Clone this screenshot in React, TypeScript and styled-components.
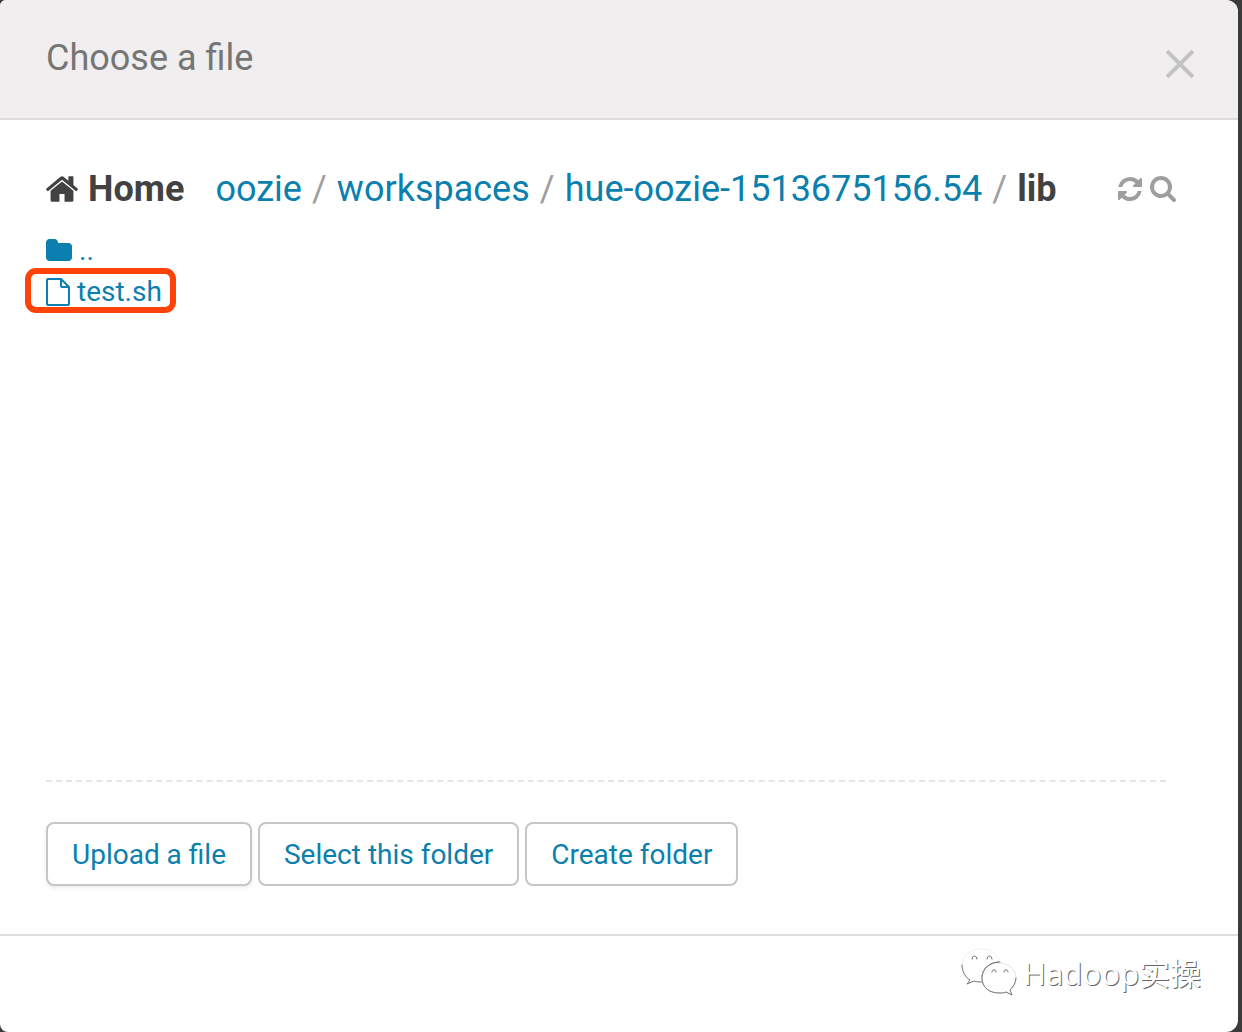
import React from "react";
import styled, { createGlobalStyle, css } from "styled-components";

const GlobalStyle = createGlobalStyle`
  *, *::before, *::after { box-sizing: border-box; }
  body {
    margin: 0;
    background: #3b3b3b;
    color: #424242;
    font-family: Roboto, "Noto Sans CJK SC", sans-serif;
    font-size: 28px;
    line-height: 40px;
  }
`;

const Backdrop = styled.div`
  min-height: 100vh;
  padding-right: 4px;
  display: flex;
`;

const Dialog = styled.section`
  flex: 1;
  min-width: 0;
  display: flex;
  flex-direction: column;
  background: #fff;
  border-radius: 6px 12px 12px 8px;
  overflow: hidden;
`;

const Header = styled.header`
  display: flex;
  justify-content: space-between;
  align-items: flex-start;
  padding: 38px 44px 40px 46px;
  background: #f0eeef;
  border-bottom: 2px solid #dcdcdc;
`;

const Title = styled.h1`
  margin: 0;
  color: #757575;
  font-size: 36px;
  font-weight: 400;
  line-height: 40px;
`;

const IconButton = styled.button`
  display: flex;
  padding: 0;
  border: 0;
  background: none;
  color: #9e9e9e;
  cursor: pointer;
`;

const CloseButton = styled(IconButton)`
  margin-top: 12px;
  color: #c3c3c3;
`;

const Body = styled.div`
  flex: 1;
  display: flex;
  flex-direction: column;
  padding: 48px 62px 48px 46px;
`;

const PathBar = styled.div`
  display: flex;
  justify-content: space-between;
  align-items: center;
`;

const Crumbs = styled.nav`
  display: flex;
  align-items: center;
  font-size: 36px;
  line-height: 42px;
`;

const linkStyle = css`
  color: #0b7fad;
  text-decoration: none;
`;

const Crumb = styled.a`
  ${linkStyle}
`;

const HomeCrumb = styled.a`
  display: flex;
  align-items: center;
  gap: 10px;
  margin-right: 31px;
  color: #424242;
  font-weight: 700;
  text-decoration: none;
`;

const CurrentCrumb = styled.span`
  font-weight: 700;
`;

const Divider = styled.span`
  width: 35px;
  color: #9e9e9e;
  text-align: center;
`;

const Actions = styled.div`
  display: flex;
  align-items: center;
  gap: 8px;
`;

const FileList = styled.ul`
  flex: 1;
  margin: 20px 10px 0 0;
  padding: 0;
  list-style: none;
  border-bottom: 2px dashed #e5e5e5;
`;

const FileItem = styled.li`
  position: relative;
  width: max-content;
`;

const FileLink = styled.a`
  ${linkStyle}
  display: flex;
  align-items: center;
  gap: 7px;
  line-height: 41px;
`;

const Highlight = styled.span`
  position: absolute;
  inset: -3px -14px -1px -21px;
  border: 6px solid #ff4208;
  border-radius: 11px;
  pointer-events: none;
`;

const ButtonRow = styled.div`
  display: flex;
  gap: 6px;
  margin-top: 40px;
`;

const Button = styled.button<{ $raised?: boolean }>`
  padding: 11px 24px 9px;
  border: 2px solid #c6c6c6;
  border-radius: 8px;
  background: #fff;
  color: #0b7fad;
  font: inherit;
  box-shadow: ${(p) => (p.$raised ? "0 2px 4px rgba(0, 0, 0, 0.08)" : "none")};
  cursor: pointer;
`;

const Footer = styled.footer`
  display: flex;
  justify-content: flex-end;
  padding: 12px 37px 34px;
  border-top: 2px solid #dcdcdc;
`;

const Watermark = styled.div`
  display: flex;
  align-items: center;
  gap: 6px;
  height: 50px;
  color: #fff;
  font-family: "Noto Sans", "Noto Sans CJK SC", sans-serif;
  font-size: 31px;
  text-shadow: 1px 1px 0 #666;
`;

const paths = {
  home: "M1472 992v480q0 26-19 45t-45 19h-384v-384h-256v384h-384q-26 0-45-19t-19-45v-480q0-1 .5-3t.5-3l575-474 575 474q1 2 1 6zm223-69l-62 74q-8 9-21 11h-3q-13 0-21-7l-692-577-692 577q-12 8-24 7-13-2-21-11l-62-74q-8-10-7-23.5t11-21.5l719-599q32-26 76-26t76 26l244 204v-195q0-14 9-23t23-9h192q14 0 23 9t9 23v408l219 182q10 8 11 21.5t-7 23.5z",
  refresh:
    "M1639 1056q0 5-1 7-64 268-268 434.5t-478 166.5q-146 0-282.5-55t-243.5-157l-129 129q-19 19-45 19t-45-19-19-45v-448q0-26 19-45t45-19h448q26 0 45 19t19 45-19 45l-137 137q71 66 161 102t187 36q134 0 250-65t186-179q11-17 53-117 8-23 30-23h192q13 0 22.5 9.5t9.5 22.5zm25-800v448q0 26-19 45t-45 19h-448q-26 0-45-19t-19-45 19-45l138-138q-148-137-349-137-134 0-250 65t-186 179q-11 17-53 117-8 23-30 23h-199q-13 0-22.5-9.5t-9.5-22.5v-7q65-268 270-434.5t480-166.5q146 0 284 55.5t245 156.5l130-129q19-19 45-19t45 19 19 45z",
  search:
    "M1216 832q0-185-131.5-316.5t-316.5-131.5-316.5 131.5-131.5 316.5 131.5 316.5 316.5 131.5 316.5-131.5 131.5-316.5zm512 832q0 52-38 90t-90 38q-54 0-90-38l-343-342q-179 124-399 124-143 0-273.5-55.5t-225-150-150-225-55.5-273.5 55.5-273.5 150-225 225-150 273.5-55.5 273.5 55.5 225 150 150 225 55.5 273.5q0 220-124 399l343 343q37 37 37 90z",
  folder:
    "M1728 608v704q0 92-66 158t-158 66h-1216q-92 0-158-66t-66-158v-960q0-92 66-158t158-66h320q92 0 158 66t66 158v32h672q92 0 158 66t66 158z",
};

function Glyph({ d, box, width, height }: { d: string; box: string; width: number; height: number }) {
  return (
    <svg width={width} height={height} viewBox={box} fill="currentColor" aria-hidden="true">
      <path d={d} />
    </svg>
  );
}

function FileGlyph() {
  return (
    <svg width="24" height="28" viewBox="0 0 24 28" fill="none" stroke="currentColor" strokeWidth="2" strokeLinejoin="round" aria-hidden="true">
      <path d="M1 2a1 1 0 0 1 1-1h13l8 8v17a1 1 0 0 1-1 1H2a1 1 0 0 1-1-1z" />
      <path d="M15 1v7a1 1 0 0 0 1 1h7" />
    </svg>
  );
}

function ChatLogo() {
  const big = "M9 33C4 29 1 24 1 18 1 8 9 1 20 1c10 0 18 6 19 14-10 0-18 6-18 15v4c-3 0-5 0-8-1l-7 3z";
  const small = "M38 15c9 0 17 6 17 15 0 5-3 9-6 12l2 5-6-3c-2 1-4 1-7 1-10 0-17-6-17-15s7-15 17-15z";
  return (
    <svg width="56" height="50" viewBox="0 0 56 50" fill="none" strokeLinecap="round" aria-hidden="true">
      <path d={big} stroke="#f2f2f2" />
      <path d="M1 17c0 6 3 12 8 15l-3 4 7-3c3 1 5 1 8 1M39 14c-10 0-18 6-18 15" stroke="#777" />
      <path d={small} fill="#fff" stroke="#e4e4e4" />
      <path d="M38 14c-9 0-17 7-17 16s7 15 17 15c3 0 5 0 7-1l6 3-2-5c3-3 6-7 6-12" stroke="#777" />
      <path d="M11 11c0-4 5-4 5 0M26 11c0-4 5-4 5 0M31 24c0-3 4-3 4 0M43 24c0-3 4-3 4 0" stroke="#666" />
    </svg>
  );
}

const crumbs = ["oozie", "workspaces", "hue-oozie-1513675156.54"];

export default function App() {
  return (
    <>
      <GlobalStyle />
      <Backdrop>
        <Dialog role="dialog" aria-labelledby="dialog-title">
          <Header>
            <Title id="dialog-title">Choose a file</Title>
            <CloseButton type="button" aria-label="Close">
              <svg width="28" height="28" viewBox="0 0 28 28" stroke="currentColor" strokeWidth="4" aria-hidden="true">
                <path d="M1 1l26 26M27 1L1 27" />
              </svg>
            </CloseButton>
          </Header>
          <Body>
            <PathBar>
              <Crumbs aria-label="Path">
                <HomeCrumb href="#home">
                  <Glyph d={paths.home} box="90 253 1612 1283" width={32} height={26} />
                  Home
                </HomeCrumb>
                {crumbs.map((name) => (
                  <React.Fragment key={name}>
                    <Crumb href={`#${name}`}>{name}</Crumb>
                    <Divider>/</Divider>
                  </React.Fragment>
                ))}
                <CurrentCrumb>lib</CurrentCrumb>
              </Crumbs>
              <Actions>
                <IconButton type="button" aria-label="Refresh">
                  <Glyph d={paths.refresh} box="128 0 1536 1792" width={24} height={28} />
                </IconButton>
                <IconButton type="button" aria-label="Search">
                  <Glyph d={paths.search} box="64 64 1664 1792" width={26} height={28} />
                </IconButton>
              </Actions>
            </PathBar>
            <FileList>
              <FileItem>
                <FileLink href="#parent">
                  <Glyph d={paths.folder} box="64 0 1664 1792" width={26} height={28} />
                  ..
                </FileLink>
              </FileItem>
              <FileItem>
                <FileLink href="#test.sh">
                  <FileGlyph />
                  test.sh
                </FileLink>
                <Highlight />
              </FileItem>
            </FileList>
            <ButtonRow>
              <Button type="button" $raised>Upload a file</Button>
              <Button type="button">Select this folder</Button>
              <Button type="button">Create folder</Button>
            </ButtonRow>
          </Body>
          <Footer>
            <Watermark>
              <ChatLogo />
              <span>Hadoop实操</span>
            </Watermark>
          </Footer>
        </Dialog>
      </Backdrop>
    </>
  );
}
